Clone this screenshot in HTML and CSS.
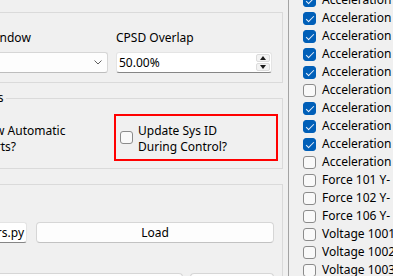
FILE: index.html
```html
<!DOCTYPE html>
<html lang="en">
<head>
  <meta charset="UTF-8" />
  <meta name="viewport" content="width=device-width, initial-scale=1" />
  <title>Control Setup</title>
  <link rel="stylesheet" href="styles.css">
</head>
<body>
  <div class="app">
    <div class="left">
      <div class="group group-cpsd">
        <div class="fields">
          <div class="field">
            <label>CPSD Window</label>
            <div class="combo">
              <span>Hann</span>
              <svg class="chevron" width="8" height="5" viewBox="0 0 8 5">
                <polyline points="0.5,0.5 4,4 7.5,0.5" fill="none" stroke="#5f5f5f" stroke-width="1" />
              </svg>
            </div>
          </div>
          <div class="field">
            <label>CPSD Overlap</label>
            <div class="spin">
              <span class="spin-value">50.00%</span>
              <div class="spin-buttons">
                <span class="spin-up"></span>
                <span class="spin-down"></span>
              </div>
            </div>
          </div>
        </div>
      </div>

      <fieldset class="group group-options">
        <legend>Options</legend>
        <div class="fields">
          <label class="check">
            <span class="box"></span>
            <span>Show Automatic<br>Charts?</span>
          </label>
          <label class="check highlight">
            <span class="box"></span>
            <span>Update Sys ID<br>During Control?</span>
          </label>
        </div>
      </fieldset>

      <div class="group group-control">
        <div class="file-row">
          <div class="line-edit"><span>custom_controllers.py</span></div>
          <button class="btn">Load</button>
        </div>
        <div class="bottom-row">
          <button class="btn"></button>
          <button class="btn"></button>
        </div>
      </div>
    </div>

    <div class="channels" id="channels"></div>
  </div>

  <script>
    const channels = [
      ["Acceleration 101 X+", true],
      ["Acceleration 101 Y+", true],
      ["Acceleration 101 Z+", true],
      ["Acceleration 102 X+", true],
      ["Acceleration 102 Y+", true],
      ["Acceleration 102 Z+", false],
      ["Acceleration 103 X+", true],
      ["Acceleration 103 Y+", true],
      ["Acceleration 103 Z+", true],
      ["Acceleration 104 X+", false],
      ["Force 101 Y-", false],
      ["Force 102 Y-", false],
      ["Force 106 Y-", false],
      ["Voltage 1001", false],
      ["Voltage 1002", false],
      ["Voltage 1003", false]
    ];

    const list = document.getElementById("channels");
    for (const [name, checked] of channels) {
      const row = document.createElement("label");
      row.className = "channel";
      row.innerHTML = `<span class="box${checked ? " checked" : ""}"></span><span>${name}</span>`;
      list.appendChild(row);
    }
  </script>
</body>
</html>
```

FILE: styles.css
```css
* {
  box-sizing: border-box;
}

html,
body {
  margin: 0;
}

body {
  width: 393px;
  height: 276px;
  overflow: hidden;
  background: #f0f0f0;
  color: #000;
  font-family: "Noto Sans", "Segoe UI", sans-serif;
  font-size: 12px;
  line-height: 16px;
}

.app {
  display: flex;
  height: 276px;
  overflow: hidden;
}

.left {
  flex: none;
  width: 342px;
  margin-left: -59px;
  padding-top: 12px;
  display: flex;
  flex-direction: column;
}

.group {
  border: 1px solid #dadada;
  margin: 0;
  min-width: 0;
}

.fields {
  display: grid;
  grid-template-columns: 156px 156px;
  gap: 8px;
}

.group-cpsd {
  padding: 17px 10px 9px;
}

.field {
  display: flex;
  flex-direction: column;
  gap: 6px;
}

.combo {
  height: 21px;
  display: flex;
  align-items: center;
  padding: 0 5px 0 4px;
  background: #fdfdfd;
  border: 1px solid #d6d6d6;
  border-bottom-color: #bdbdbd;
  border-radius: 3px;
}

.combo span {
  flex: 1;
}

.spin {
  height: 21px;
  display: flex;
  background: #fff;
  border: 1px solid #e4e4e4;
  border-bottom-color: #868686;
  border-radius: 3px;
}

.spin-value {
  flex: 1;
  padding-left: 2px;
  line-height: 19px;
}

.spin-buttons {
  width: 15px;
  display: flex;
  flex-direction: column;
  padding: 1px 1px 1px 0;
  gap: 1px;
}

.spin-buttons span {
  flex: 1;
  display: flex;
  align-items: center;
  justify-content: center;
  background: #f3f3f3;
  border: 1px solid #dcdcdc;
  border-radius: 2px;
}

.spin-up::after,
.spin-down::after {
  content: "";
  border-left: 3px solid transparent;
  border-right: 3px solid transparent;
}

.spin-up::after {
  border-bottom: 4px solid #1a1a1a;
}

.spin-down::after {
  border-top: 4px solid #1a1a1a;
}

.group-options {
  margin-top: 7px;
  padding: 8px 10px 7px;
}

.group-options legend {
  padding: 0 2px;
  margin-left: 5px;
  line-height: 16px;
}

.check {
  display: flex;
  align-items: flex-start;
  gap: 5px;
  padding: 7px 4px 4px;
  margin: 0 -6px 0 -2px;
  border: 2px solid transparent;
}

.check .box {
  margin-top: 8px;
}

.highlight {
  border-color: #ff0000;
}

.box {
  flex: none;
  position: relative;
  width: 13px;
  height: 13px;
  background: #f9f9f9;
  border: 1px solid #8b8b8b;
  border-radius: 3px;
}

.box.checked {
  background: #005fb8;
  border-color: #005fb8;
}

.box.checked::after {
  content: "";
  position: absolute;
  left: 4px;
  top: 1px;
  width: 3px;
  height: 7px;
  border: solid #e8f0fb;
  border-width: 0 1px 1px 0;
  transform: rotate(45deg);
}

.group-control {
  margin-top: 15px;
  padding: 37px 8px 0 10px;
  flex: 1;
}

.file-row {
  display: grid;
  grid-template-columns: 75px 1fr;
  gap: 9px;
}

.line-edit {
  height: 21px;
  display: flex;
  justify-content: flex-end;
  overflow: hidden;
  padding-right: 2px;
  line-height: 19px;
  background: #fff;
  border: 1px solid #e4e4e4;
  border-bottom-color: #868686;
  border-radius: 3px;
  white-space: nowrap;
}

.btn {
  height: 21px;
  font: inherit;
  color: #000;
  background: #fdfdfd;
  border: 1px solid #d6d6d6;
  border-bottom-color: #c2c2c2;
  border-radius: 4px;
  padding: 0;
}

.bottom-row {
  display: grid;
  grid-template-columns: 1fr 84px;
  gap: 7px;
  margin-top: 30px;
}

.channels {
  flex: 1;
  min-width: 0;
  margin-left: 5px;
  margin-top: -9px;
  padding-left: 14px;
  border-left: 1px solid #a3a3a3;
  overflow: hidden;
}

.channel {
  height: 18px;
  display: flex;
  align-items: center;
  gap: 6px;
  white-space: nowrap;
}
```
